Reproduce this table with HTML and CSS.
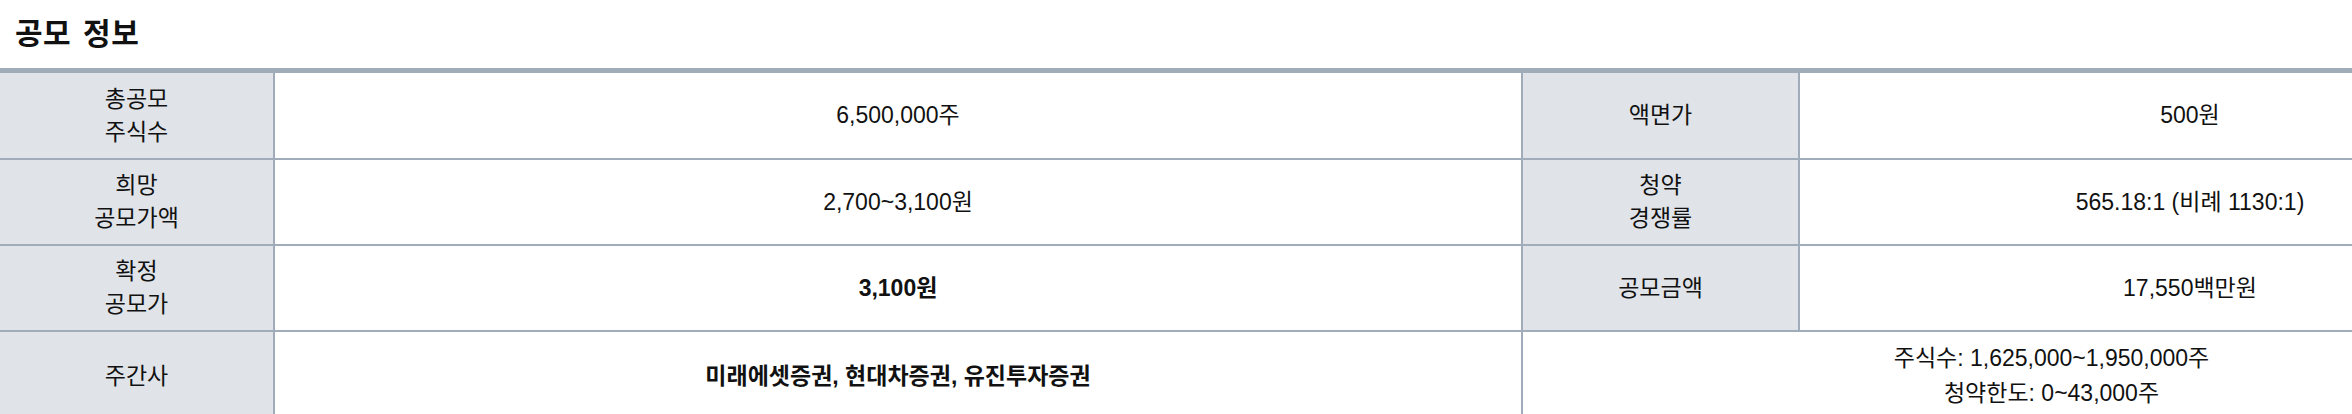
FILE: index.html
```html
<!DOCTYPE html>
<html lang="ko">
<head>
<meta charset="utf-8">
<title>공모 정보</title>
<link rel="stylesheet" href="styles.css">
</head>
<body>
<h2 class="title">공모 정보</h2>
<table class="info">
  <tbody>
    <tr class="first">
      <th class="c1">총공모<br>주식수</th>
      <td class="c2">6,500,000주</td>
      <th class="c3">액면가</th>
      <td class="c4">500원</td>
    </tr>
    <tr>
      <th>희망<br>공모가액</th>
      <td>2,700~3,100원</td>
      <th>청약<br>경쟁률</th>
      <td>565.18:1 (비례 1130:1)</td>
    </tr>
    <tr>
      <th>확정<br>공모가</th>
      <td><b>3,100원</b></td>
      <th>공모금액</th>
      <td>17,550백만원</td>
    </tr>
    <tr>
      <th>주간사</th>
      <td><b>미래에셋증권, 현대차증권, 유진투자증권</b></td>
      <td colspan="2" class="multi">주식수: 1,625,000~1,950,000주<br>청약한도: 0~43,000주</td>
    </tr>
  </tbody>
</table>
</body>
</html>
```

FILE: styles.css
```css
html, body {
  margin: 0;
  padding: 0;
  background: #ffffff;
  color: #111111;
  font-family: "Liberation Sans", "Noto Sans CJK KR", sans-serif;
}

.title {
  margin: 0;
  padding: 0 15px;
  height: 68px;
  line-height: 68px;
  font-size: 30px;
  font-weight: 700;
  letter-spacing: 0.5px;
  word-spacing: 3px;
  color: #111111;
}

.info {
  table-layout: fixed;
  width: 2582px;
  border-collapse: separate;
  border-spacing: 0;
  border-top: 5px solid #a0acb9;
  font-size: 23px;
}

.info th,
.info td {
  box-sizing: border-box;
  border-right: 2px solid #a0acb9;
  border-bottom: 2px solid #a0acb9;
  text-align: center;
  vertical-align: middle;
  line-height: 33px;
  padding: 9px 4px 9px 4px;
  height: 86px;
}

.info .first th,
.info .first td {
  height: 87px;
}

.info th {
  background: #e0e4e9;
  font-weight: 400;
}

.info td {
  background: #ffffff;
}

.info .multi {
  line-height: 35px;
}

.c1 { width: 275px; }
.c2 { width: 1248px; }
.c3 { width: 277px; }
.c4 { width: 782px; }
```
